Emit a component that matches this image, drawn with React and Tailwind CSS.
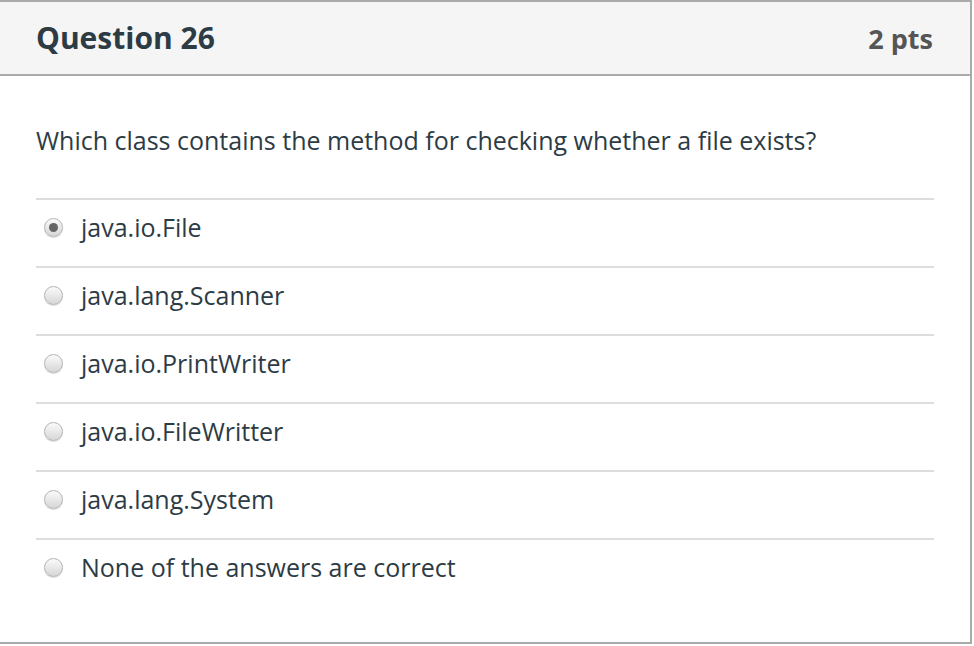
const options = [
  'java.io.File',
  'java.lang.Scanner',
  'java.io.PrintWriter',
  'java.io.FileWritter',
  'java.lang.System',
  'None of the answers are correct',
]

function Radio({ checked }) {
  return (
    <span className="w-[19px] h-[19px] rounded-full border border-[#b5b5b5] bg-gradient-to-b from-[#fbfbfb] to-[#d6d6d6] shadow-[0_1px_1px_rgba(0,0,0,0.15)] flex items-center justify-center shrink-0">
      {checked && <span className="w-[9px] h-[9px] rounded-full bg-[#666]" />}
    </span>
  )
}

const App = () => {
  const selected = 0
  return (
    <div className="w-[974px] h-[646px] bg-white" style={{ fontFamily: '"Open Sans", sans-serif' }}>
      <div className="w-[972px] h-[644px] border-t-2 border-r-2 border-b-2 border-[#aaaaaa] flex flex-col">
        <div className="h-[74px] shrink-0 bg-[#f5f5f5] border-b-2 border-[#aaaaaa] flex items-center justify-between pl-[36px] pr-[37px]">
          <h2 className="text-[30px] font-bold text-[#2d3b45] leading-none">Question 26</h2>
          <span className="text-[27px] font-bold text-[#555] leading-none">2 pts</span>
        </div>

        <div className="px-[36px]">
          <p className="text-[25px] text-[#2d3b45] leading-[34px] pt-[47px] pb-[41px]">
            Which class contains the method for checking whether a file exists?
          </p>
          <div>
            {options.map((opt, i) => (
              <div key={i} className="border-t-2 border-[#dddddd] pt-[10px] pb-[22px] flex items-center">
                <div className="w-[45px] pl-[8px]">
                  <Radio checked={i === selected} />
                </div>
                <span className="text-[25px] text-[#2d3b45] leading-[34px]">{opt}</span>
              </div>
            ))}
          </div>
        </div>
      </div>
    </div>
  )
}

export default App
